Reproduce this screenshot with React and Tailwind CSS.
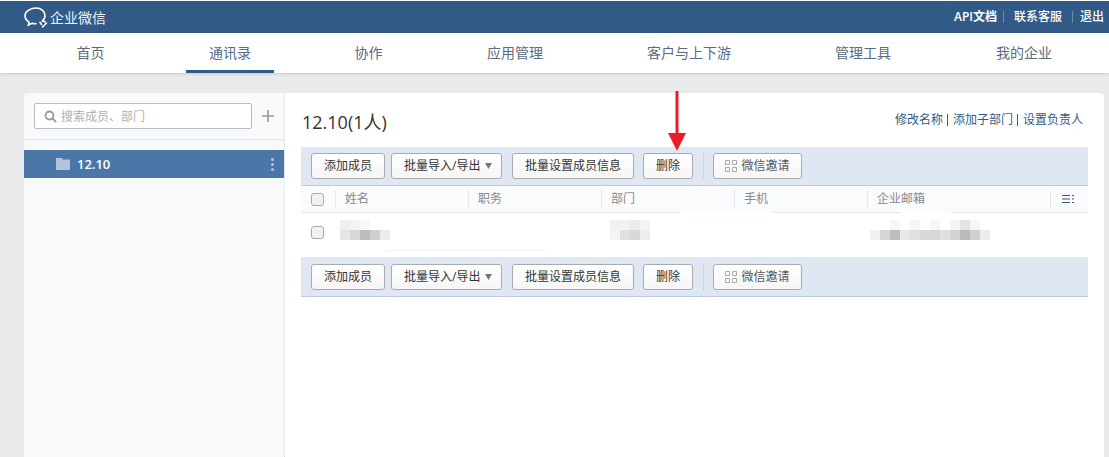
import React from "react";

const FONT = "font-['Open_Sans','Noto_Sans_CJK_SC',sans-serif]";

const tabs = [
  { label: "首页", w: "w-[133px]" },
  { label: "通讯录", w: "w-[146px]", active: true },
  { label: "协作", w: "w-[131px]" },
  { label: "应用管理", w: "w-[162px]" },
  { label: "客户与上下游", w: "w-[186px]" },
  { label: "管理工具", w: "w-[162px]" },
  { label: "我的企业", w: "w-[160px]" },
];

function Logo() {
  return (
    <svg width="27" height="24" viewBox="0 0 27 24" fill="none" stroke="#fff" strokeWidth="1.6" strokeLinecap="round">
      <path d="M19 16.5c2-1.6 3-3.6 3-5.900C22 6 17.800 3 13 3S2 6 2 10.600c0 3 1.700 5.200 4 6.600l-.6 2.800 3.600-1.700c1.400.4 2.700.6 4 .5" />
      <path d="M17 17.500l1.500 2M20 15.500l2 1.500M22 19.500l1.500-1.500M19.500 22l1.500-1.500" />
    </svg>
  );
}

function Btn({ className = "", children }) {
  return (
    <button className={`h-[26px] shrink-0 rounded-[3px] border border-[#ababab] bg-gradient-to-b from-white to-[#f6f6f6] text-[12px] text-[#333] flex items-center justify-center ${className}`}>
      {children}
    </button>
  );
}

function Toolbar({ className = "" }) {
  return (
    <div className={`bg-[#dfe7f3] border-b border-[#bccbdd] flex items-center pl-[10px] ${className}`}>
      <Btn className="w-[74px]">添加成员</Btn>
      <Btn className="w-[111px] ml-[6px] !justify-start pl-[12px]">
        批量导入/导出
        <svg width="7" height="6" viewBox="0 0 7 6" className="ml-[5px]"><path d="M0 0h7L3.500 6z" fill="#777" /></svg>
      </Btn>
      <Btn className="w-[122px] ml-[10px]">批量设置成员信息</Btn>
      <Btn className="w-[50px] ml-[9px]">删除</Btn>
      <div className="w-px h-[26px] bg-[#ccd3dc] ml-[10px]" />
      <Btn className="w-[89px] ml-[9px] text-[#555]">
        <svg width="12" height="12" viewBox="0 0 12 12" fill="none" stroke="#aaa" strokeWidth="1" className="mr-[4px]">
          <path d="M.5.500h4v4h-4zM7.500.500h4v4h-4zM.5 7.500h4v4h-4zM7.500 7.500h4v4h-4z" />
        </svg>
        微信邀请
      </Btn>
    </div>
  );
}

function Check() {
  return <span className="block w-[13px] h-[13px] rounded-[3px] border border-[#a9a9a9] bg-[#f1f1f1]" />;
}

function HeadCell({ className = "", children }) {
  return (
    <div className={`h-[18px] border-l border-[#e4e7ec] pl-[9px] flex items-center text-[12px] text-[#888] shrink-0 ${className}`}>
      {children}
    </div>
  );
}

// mosaic patches that hide personal data in the picture
function Mosaic({ cells, className = "" }) {
  return (
    <div className={`flex flex-col ${className}`}>
      {cells.map((row, i) => (
        <div key={i} className="flex">
          {row.map((c, j) => (
            <span key={j} className={`w-[10px] h-[10px] ${c}`} />
          ))}
        </div>
      ))}
    </div>
  );
}

export default function App() {
  return (
    <div className={`relative w-[1109px] h-[457px] overflow-hidden bg-[#e8eaec] ${FONT}`}>
      <div className="h-px bg-white" />
      <header className="h-[32px] bg-[#325a86] flex items-center text-white">
        <div className="ml-[23px]"><Logo /></div>
        <span className="text-[14px] text-[#eef2f6]">企业微信</span>
        <div className="ml-auto flex items-center text-[12px] font-medium pr-[5px]">
          <span className="font-semibold">API文档</span>
          <span className="w-px h-[12px] bg-[#6f8bab] mx-[6px]" />
          <span className="ml-[4px]">联系客服</span>
          <span className="w-px h-[12px] bg-[#6f8bab] ml-[10px] mr-[7px]" />
          <span>退出</span>
        </div>
      </header>

      <nav className="h-[40px] bg-white flex pl-[24px] shadow-[0_1px_3px_rgba(0,0,0,0.15)]">
        {tabs.map((t) => (
          <div key={t.label} className={`${t.w} shrink-0 flex justify-center text-[14px] text-[#5a6b80]`}>
            <span className={`h-full flex items-center justify-center ${t.active ? "w-[88px] border-b-[3px] border-[#325a86] pt-[1px]" : "pb-[2px]"}`}>{t.label}</span>
          </div>
        ))}
      </nav>

      <main className="mt-[20px] ml-[24px] w-[1080px] h-[400px] bg-white rounded-t-[4px] flex overflow-hidden">
        <aside className="w-[261px] shrink-0 bg-[#f8f9fb] border-r border-dotted border-[#d5dce6]">
          <div className="h-[47px] border-b border-[#e4e7ea] flex items-start pt-[10px] pl-[10px]">
            <div className="w-[218px] h-[26px] bg-white border border-[#b3bdcc] rounded-[2px] flex items-center pl-[9px]">
              <svg width="13" height="13" viewBox="0 0 13 13" fill="none" stroke="#999" strokeWidth="1.800">
                <circle cx="5.500" cy="5.500" r="4" />
                <path d="M8.500 8.500L12 12" />
              </svg>
              <span className="ml-[4px] pt-[2px] text-[12px] text-[#b0b0b0]">搜索成员、部门</span>
            </div>
            <svg width="12" height="12" viewBox="0 0 12 12" className="ml-[10px] mt-[7px]">
              <path d="M6 0v12M0 6h12" stroke="#999" strokeWidth="1.600" />
            </svg>
          </div>
          <div className="mt-[10px] h-[28px] bg-[#4a76a8] flex items-center pl-[32px] pr-[10px] text-white">
            <svg width="14" height="12" viewBox="0 0 14 12" fill="#b3c5da"><path d="M0 0h6l1 1.500h7V12H0z" /></svg>
            <span className="ml-[7px] pt-[2px] text-[13px] font-semibold">12.10</span>
            <span className="ml-auto flex flex-col gap-[2px]">
              <i className="block w-[3px] h-[3px] rounded-full bg-[#b3c5da]" />
              <i className="block w-[3px] h-[3px] rounded-full bg-[#b3c5da]" />
              <i className="block w-[3px] h-[3px] rounded-full bg-[#b3c5da]" />
            </span>
          </div>
        </aside>

        <section className="flex-1 pl-[16px] pr-[16px]">
          <div className="h-[54px] flex items-start justify-between">
            <h1 className="mt-[16px] ml-px text-[18px] leading-[27px] text-[#333] font-normal">12.10(1人)</h1>
            <div className="mt-[18px] pr-[5px] flex items-center text-[12px] text-[#325a86]">
              <span>修改名称</span>
              <i className="w-px h-[12px] bg-[#325a86] ml-[4px] mr-[5px]" />
              <span>添加子部门</span>
              <i className="w-px h-[12px] bg-[#325a86] ml-[4px] mr-[5px]" />
              <span>设置负责人</span>
            </div>
          </div>

          <Toolbar className="h-[39px]" />

          <div className="h-[26px] bg-[#fafbfd] flex items-center">
            <div className="w-[34px] pl-[10px] shrink-0"><Check /></div>
            <HeadCell className="w-[133px]">姓名</HeadCell>
            <HeadCell className="w-[133px]">职务</HeadCell>
            <HeadCell className="w-[133px]">部门</HeadCell>
            <HeadCell className="w-[133px]">手机</HeadCell>
            <HeadCell className="w-[183px]">企业邮箱</HeadCell>
            <HeadCell className="w-[38px] pl-[11px]">
              <svg width="12" height="10" viewBox="0 0 12 10" stroke="#325a86" strokeWidth="1">
                <path d="M0 1.500h8M0 5h8M0 8.500h8M10 1.500h2M10 5h2M10 8.500h2" />
              </svg>
            </HeadCell>
          </div>
          <div className="flex h-px">
            <span className="w-[378px] bg-[#e4e7ec]" />
            <span className="w-[93px]" />
            <span className="w-[129px] bg-[#e4e7ec]" />
            <span className="w-[50px]" />
            <span className="w-[137px] bg-[#e4e7ec]" />
          </div>

          <div className="h-[44px] relative flex items-start">
            <div className="w-[10px] shrink-0" />
            <div className="mt-[13px]"><Check /></div>
            <Mosaic
              className="ml-[16px] mt-[7px] w-[50px]"
              cells={[
                ["bg-[#efefef]", "bg-[#f3f3f3]", "bg-[#f8f8f8]", "bg-white", "bg-white"],
                ["bg-[#e6e6e6]", "bg-[#d8d8d8]", "bg-[#bdbdbd]", "bg-[#cfcfcf]", "bg-[#ececec]"],
              ]}
            />
            <Mosaic
              className="ml-[220px] mt-[7px]"
              cells={[
                ["bg-[#f1f1f1]", "bg-[#f1f1f1]", "bg-[#ebebeb]", "bg-[#f3f3f3]"],
                ["bg-[#f4f4f4]", "bg-[#e0e0e0]", "bg-[#d8d8d8]", "bg-[#ededed]"],
              ]}
            />
            <Mosaic
              className="ml-[220px] mt-[7px]"
              cells={[
                ["bg-white", "bg-white", "bg-[#f6f6f6]", "bg-white", "bg-[#f6f6f6]", "bg-white", "bg-[#f6f6f6]", "bg-white", "bg-[#f4f4f4]", "bg-[#e4e4e4]", "bg-[#f6f6f6]", "bg-white"],
                ["bg-[#f1f1f1]", "bg-[#d6d6d6]", "bg-[#bcbcbc]", "bg-[#e8e8e8]", "bg-[#e0e0e0]", "bg-[#d8d8d8]", "bg-[#d8d8d8]", "bg-[#e0e0e0]", "bg-[#d4d4d4]", "bg-[#bbb]", "bg-[#d0d0d0]", "bg-[#ececec]"],
              ]}
            />
            <div className="absolute left-[84px] top-[37px] w-[160px] h-px bg-[#eef2f7]" />
          </div>

          <Toolbar className="h-[40px]" />
        </section>
      </main>

      {/* annotation arrow */}
      <svg width="20" height="60" viewBox="0 0 20 60" className="absolute left-[667px] top-[91px]">
        <path d="M10 0v46" stroke="#ed1c24" strokeWidth="3" />
        <path d="M1 42h18l-9 18z" fill="#ed1c24" />
      </svg>
    </div>
  );
}
